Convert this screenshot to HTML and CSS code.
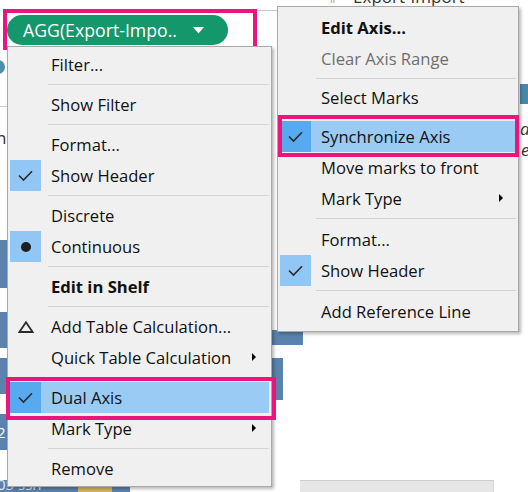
FILE: index.html
```html
<!DOCTYPE html>
<html>
<head>
<meta charset="utf-8">
<link rel="stylesheet" href="styles.css">
</head>
<body>
<div class="stage">
  <div class="bg">
    <div class="bg-topline"></div>
    <div class="bg-title"><span class="bg-tick">ıı</span>Export-Import</div>
    <div class="bg-circle"></div>
    <div class="bg-leftline"></div>
    <div class="bg-n">n</div>
    <div class="bg-bar bar1"></div>
    <div class="bg-bar bar2"></div>
    <div class="bg-bar bar3"></div>
    <div class="bg-bar bar4"><span>2</span></div>
    <div class="bg-bar bar5"><span>05 ssn</span></div>
    <div class="bg-yellow"></div>
    <div class="bg-bar bar6"></div>
    <div class="bg-bar bar7"></div>
    <div class="bg-teal"></div>
    <div class="bg-italic it1">d/</div>
    <div class="bg-italic it2">e</div>
    <div class="bg-scroll"></div>
  </div>

  <div class="shelf-mark">
    <div class="pill">
      <span class="pill-text">AGG(Export-Impo..</span>
      <svg class="pill-caret" width="11" height="7" viewBox="0 0 11 7"><path d="M0 0 L11 0 L5.5 6.5 Z" fill="#fff"/></svg>
    </div>
  </div>

  <div class="menu menu-left">
    <div class="item"><span class="gut"></span><span class="label">Filter...</span></div>
    <div class="sep"></div>
    <div class="item"><span class="gut"></span><span class="label">Show Filter</span></div>
    <div class="sep"></div>
    <div class="item"><span class="gut"></span><span class="label">Format...</span></div>
    <div class="item"><span class="gut checked"><svg width="15" height="12" viewBox="0 0 15 12"><path d="M1 5.5 L5.5 10 L14 1.2" fill="none" stroke="#2b2b2b" stroke-width="1.6"/></svg></span><span class="label">Show Header</span></div>
    <div class="sep"></div>
    <div class="item"><span class="gut"></span><span class="label">Discrete</span></div>
    <div class="item"><span class="gut checked"><span class="dot"></span></span><span class="label">Continuous</span></div>
    <div class="sep"></div>
    <div class="item"><span class="gut"></span><span class="label bold">Edit in Shelf</span></div>
    <div class="sep"></div>
    <div class="item"><span class="gut"><svg width="16" height="12" viewBox="0 0 16 12"><path d="M8 1.2 L14.6 11 L1.4 11 Z" fill="none" stroke="#2b2b2b" stroke-width="1.8" stroke-linejoin="miter"/></svg></span><span class="label">Add Table Calculation...</span></div>
    <div class="item"><span class="gut"></span><span class="label">Quick Table Calculation</span><span class="arrow"></span></div>
    <div class="sep"></div>
    <div class="item hot"><span class="gut checked"><svg width="15" height="12" viewBox="0 0 15 12"><path d="M1 5.5 L5.5 10 L14 1.2" fill="none" stroke="#2b2b2b" stroke-width="1.6"/></svg></span><span class="label">Dual Axis</span></div>
    <div class="item"><span class="gut"></span><span class="label">Mark Type</span><span class="arrow"></span></div>
    <div class="sep"></div>
    <div class="item"><span class="gut"></span><span class="label">Remove</span></div>
  </div>

  <div class="menu menu-right">
    <div class="item"><span class="gut"></span><span class="label bold">Edit Axis...</span></div>
    <div class="item"><span class="gut"></span><span class="label disabled">Clear Axis Range</span></div>
    <div class="sep"></div>
    <div class="item"><span class="gut"></span><span class="label">Select Marks</span></div>
    <div class="sep"></div>
    <div class="item hot"><span class="gut checked"><svg width="15" height="12" viewBox="0 0 15 12"><path d="M1 5.5 L5.5 10 L14 1.2" fill="none" stroke="#2b2b2b" stroke-width="1.6"/></svg></span><span class="label">Synchronize Axis</span></div>
    <div class="item"><span class="gut"></span><span class="label">Move marks to front</span></div>
    <div class="item"><span class="gut"></span><span class="label">Mark Type</span><span class="arrow"></span></div>
    <div class="sep tall"></div>
    <div class="item"><span class="gut"></span><span class="label">Format...</span></div>
    <div class="item"><span class="gut checked"><svg width="15" height="12" viewBox="0 0 15 12"><path d="M1 5.5 L5.5 10 L14 1.2" fill="none" stroke="#2b2b2b" stroke-width="1.6"/></svg></span><span class="label">Show Header</span></div>
    <div class="sep tall"></div>
    <div class="item"><span class="gut"></span><span class="label">Add Reference Line</span></div>
  </div>

  <div class="mark mark-dual"></div>
  <div class="mark mark-sync"></div>
</div>
</body>
</html>
```

FILE: styles.css
```css
* { box-sizing: border-box; }
html, body { margin: 0; padding: 0; background: #fff; }
body { font-family: "Open Sans", "Noto Sans", sans-serif; }

.stage {
  position: relative;
  width: 528px;
  height: 492px;
  overflow: hidden;
  background: #fff;
}

/* ---------- background fragments of the workbook ---------- */
.bg { position: absolute; inset: 0; }
.bg > div { position: absolute; }
.bg-topline { left: 250px; top: 10px; width: 30px; height: 1px; background: #c8c8c8; }
.bg-title { left: 330px; top: -15px; font-size: 17px; color: #333; white-space: nowrap; }
.bg-tick { font-size: 10px; color: #999; margin-right: 18px; }
.bg-circle { left: -9px; top: 60px; width: 14px; height: 14px; border-radius: 50%; background: #4d8fb0; }
.bg-leftline { left: 0; top: 106px; width: 8px; height: 1px; background: #cfcfcf; }
.bg-n { left: -4px; top: 126px; font-size: 17px; color: #333; }
.bg-bar { background: #5b82ad; }
.bar1 { left: 0; top: 240px; width: 8px; height: 48px; }
.bar2 { left: 0; top: 312px; width: 8px; height: 36px; }
.bar3 { left: 0; top: 358px; width: 8px; height: 36px; }
.bar4 { left: 0; top: 414px; width: 8px; height: 36px; }
.bar4 span { color: #fff; font-size: 15px; position: absolute; left: -3px; top: 8px; }
.bar5 { left: 0; top: 480px; width: 130px; height: 14px; }
.bar5 span { color: #dfe8f2; font-size: 15px; position: absolute; left: -3px; top: -6px; }
.bg-yellow { left: 78px; top: 486px; width: 34px; height: 8px; background: #d6b85a; }
.bar6 { left: 271px; top: 330px; width: 32px; height: 15px; }
.bar7 { left: 271px; top: 358px; width: 12px; height: 42px; }
.bg-teal { left: 520px; top: 84px; width: 10px; height: 20px; background: #4a86a8; }
.bg-italic { font-style: italic; font-size: 17px; line-height: 16px; color: #333; }
.it1 { left: 520px; top: 121px; }
.it2 { left: 521px; top: 142px; }
.bg-scroll { left: 300px; top: 480px; width: 194px; height: 14px; background: #e6e6e6; border-top: 1px solid #cdcdcd; border-right: 1px solid #d8d8d8; }

/* ---------- shelf pill ---------- */
.shelf-mark {
  position: absolute;
  left: 3px;
  top: 9px;
  width: 254px;
  height: 41px;
  border: 4px solid #ea157d;
  background: #fff;
  display: flex;
  align-items: center;
}
.pill {
  width: 221px;
  height: 30px;
  border-radius: 15px;
  background: #14976a;
  display: flex;
  align-items: center;
  padding-left: 16px;
  gap: 16px;
}
.pill-text { color: #fff; font-size: 17.7px; white-space: nowrap; }
.pill-caret { display: block; margin-top: 1px; }

/* ---------- context menus ---------- */
.menu {
  position: absolute;
  background: #f0f0f0;
  border: 1px solid #a9a9a9;
  box-shadow: 2px 2px 3px rgba(0,0,0,0.28);
  padding: 2px 0;
  display: flex;
  flex-direction: column;
  font-size: 16.6px;
  color: #111;
}
.menu-left { left: 7px; top: 46px; width: 265px; }
.menu-right { left: 277px; top: 6px; width: 242px; padding: 5px 0 4px; }

.item {
  height: 31px;
  margin: 0 2px 0 2px;
  display: flex;
  align-items: center;
  position: relative;
}
.item.hot { background: #99cbf5; }
.gut {
  width: 31px;
  height: 31px;
  flex: none;
  display: flex;
  align-items: center;
  justify-content: center;
}
.gut.checked { background: #92c7f5; }
.item.hot .gut.checked { background: #57a9f0; }
.dot { width: 10px; height: 10px; border-radius: 50%; background: #1e1e1e; }
.label { margin-left: 10px; white-space: nowrap; line-height: 31px; }
.label.bold { font-weight: 700; }
.label.disabled { color: #6e6e6e; }
.arrow {
  position: absolute;
  right: 13px;
  top: 11px;
  width: 0;
  height: 0;
  border-top: 4px solid transparent;
  border-bottom: 4px solid transparent;
  border-left: 4px solid #000;
}
.sep {
  height: 1px;
  margin: 4px 2px 4px 40px;
  background: #d3d3d3;
  flex: none;
}
.menu-right .sep { margin: 4px 2px 3px 38px; }
.menu-right .sep.tall { margin-bottom: 5px; }

/* ---------- pink annotation frames ---------- */
.mark {
  position: absolute;
  border: 4px solid #ea157d;
}
.mark-dual { left: 6px; top: 377px; width: 270px; height: 43px; }
.mark-sync { left: 278px; top: 115px; width: 241px; height: 42px; }
```
